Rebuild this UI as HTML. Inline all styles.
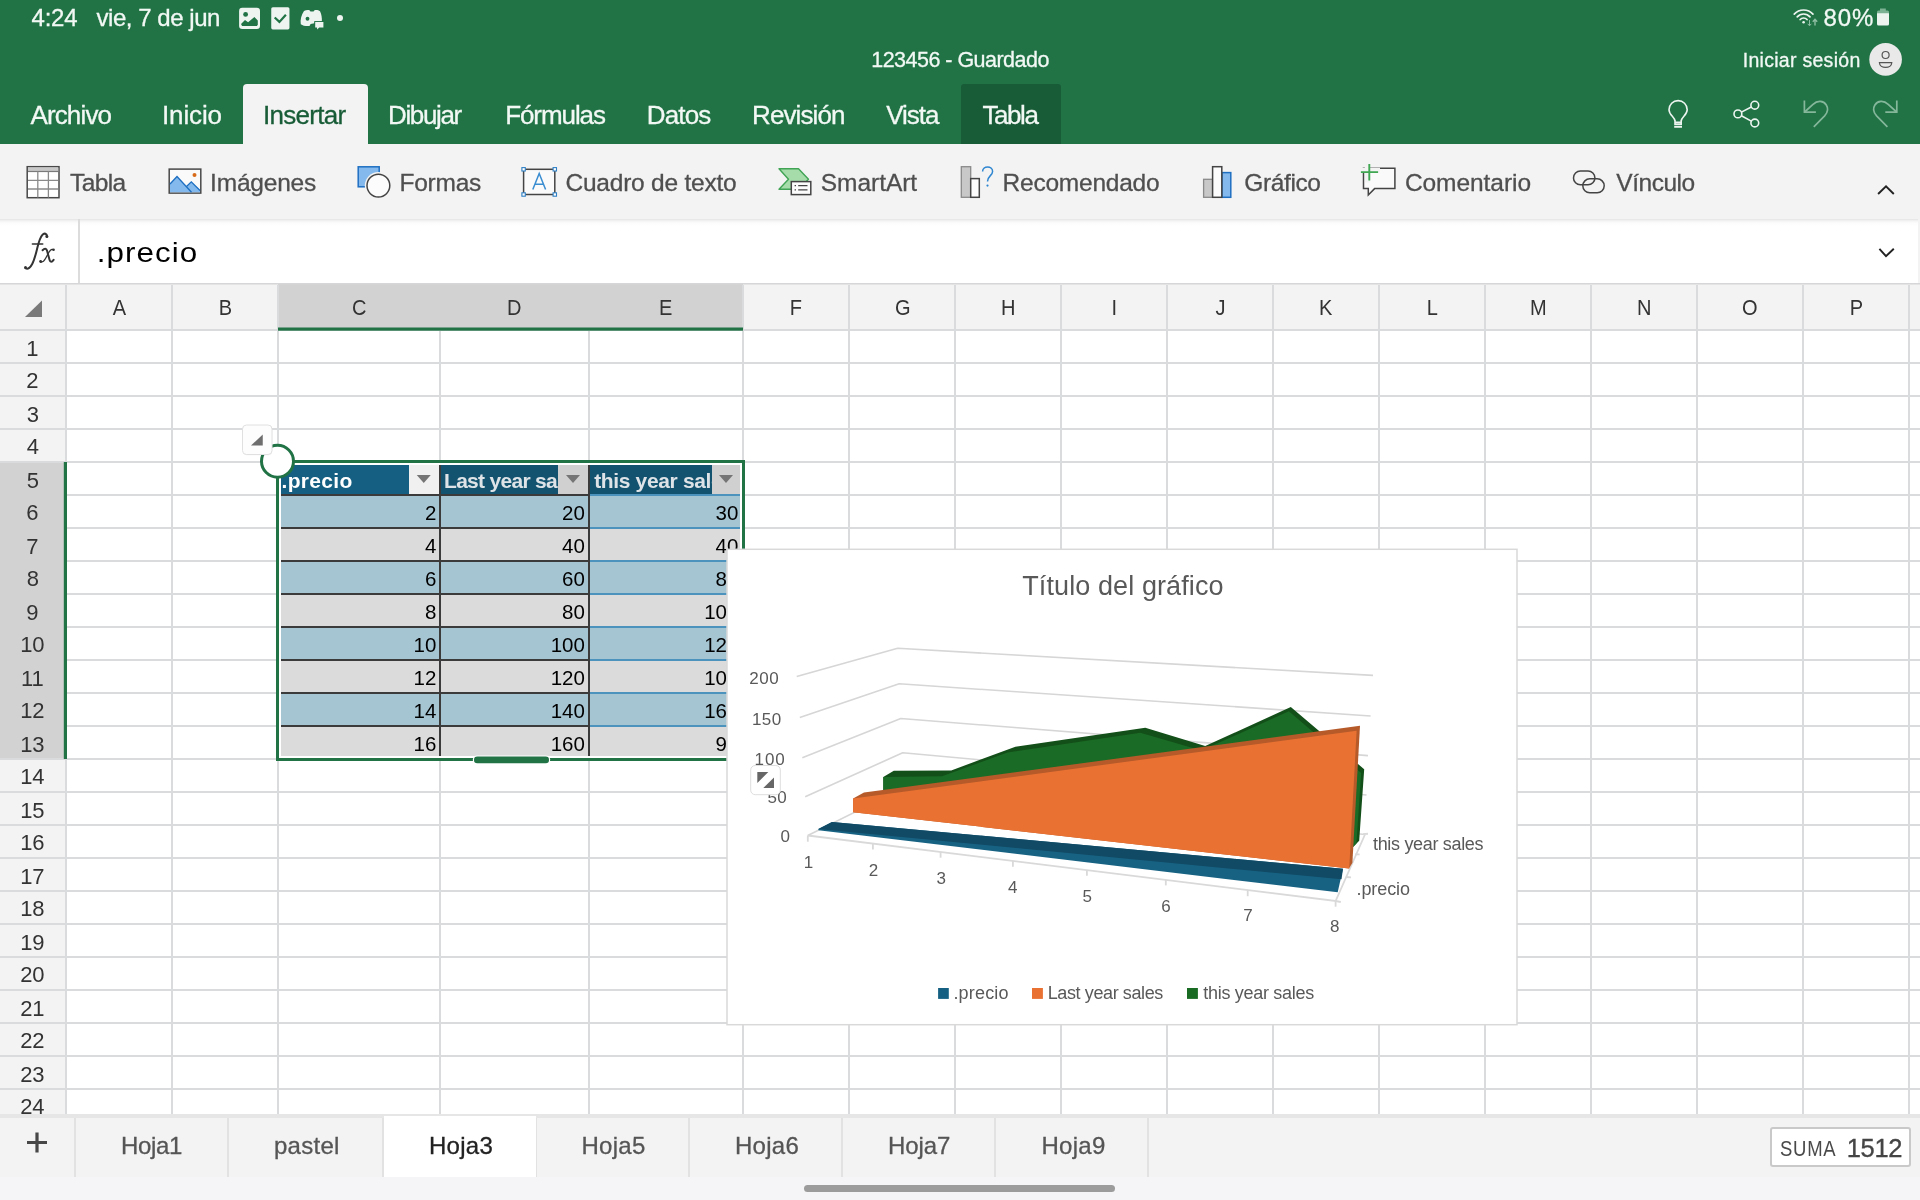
<!DOCTYPE html>
<html lang="es"><head><meta charset="utf-8"><title>Excel</title><style>
html,body{margin:0;padding:0}
body{will-change:transform;width:1920px;height:1200px;overflow:hidden;position:relative;background:#fff;font-family:"Liberation Sans",sans-serif}
.r{position:absolute;display:block}
.t{position:absolute;white-space:nowrap;line-height:1;font-family:"Liberation Sans",sans-serif}
.clip{position:absolute;overflow:hidden}
</style></head><body>
<div class="r" style="left:0;top:284px;width:1920px;height:46px;background:#f3f3f3"></div>
<div class="r" style="left:0;top:330px;width:66px;height:784px;background:#f3f3f3"></div>
<div class="r" style="left:278px;top:284px;width:465px;height:46px;background:#d2d2d2"></div>
<div class="r" style="left:0;top:462px;width:65px;height:297px;background:#d2d2d2"></div>
<svg class="r" style="left:0;top:283px" width="1920" height="831" viewBox="0 283 1920 831">
<g stroke="#dadbdd" stroke-width="2" fill="none" shape-rendering="crispEdges">
<line x1="0" y1="283.7" x2="1920" y2="283.7" stroke="#d6d6d8" stroke-width="1.8" shape-rendering="auto"/>
<line x1="0" y1="330" x2="1920" y2="330"/>
<line x1="0" y1="363" x2="1920" y2="363"/>
<line x1="0" y1="396" x2="1920" y2="396"/>
<line x1="0" y1="429" x2="1920" y2="429"/>
<line x1="0" y1="462" x2="1920" y2="462"/>
<line x1="0" y1="495" x2="1920" y2="495"/>
<line x1="0" y1="528" x2="1920" y2="528"/>
<line x1="0" y1="561" x2="1920" y2="561"/>
<line x1="0" y1="594" x2="1920" y2="594"/>
<line x1="0" y1="627" x2="1920" y2="627"/>
<line x1="0" y1="660" x2="1920" y2="660"/>
<line x1="0" y1="693" x2="1920" y2="693"/>
<line x1="0" y1="726" x2="1920" y2="726"/>
<line x1="0" y1="759" x2="1920" y2="759"/>
<line x1="0" y1="792" x2="1920" y2="792"/>
<line x1="0" y1="825" x2="1920" y2="825"/>
<line x1="0" y1="858" x2="1920" y2="858"/>
<line x1="0" y1="891" x2="1920" y2="891"/>
<line x1="0" y1="924" x2="1920" y2="924"/>
<line x1="0" y1="957" x2="1920" y2="957"/>
<line x1="0" y1="990" x2="1920" y2="990"/>
<line x1="0" y1="1023" x2="1920" y2="1023"/>
<line x1="0" y1="1056" x2="1920" y2="1056"/>
<line x1="0" y1="1089" x2="1920" y2="1089"/>
<line x1="66" y1="284.6" x2="66" y2="1114"/>
<line x1="172" y1="284.6" x2="172" y2="1114"/>
<line x1="278" y1="284.6" x2="278" y2="1114"/>
<line x1="440" y1="284.6" x2="440" y2="1114"/>
<line x1="589" y1="284.6" x2="589" y2="1114"/>
<line x1="743" y1="284.6" x2="743" y2="1114"/>
<line x1="849" y1="284.6" x2="849" y2="1114"/>
<line x1="955" y1="284.6" x2="955" y2="1114"/>
<line x1="1061" y1="284.6" x2="1061" y2="1114"/>
<line x1="1167" y1="284.6" x2="1167" y2="1114"/>
<line x1="1273" y1="284.6" x2="1273" y2="1114"/>
<line x1="1379" y1="284.6" x2="1379" y2="1114"/>
<line x1="1485" y1="284.6" x2="1485" y2="1114"/>
<line x1="1591" y1="284.6" x2="1591" y2="1114"/>
<line x1="1697" y1="284.6" x2="1697" y2="1114"/>
<line x1="1803" y1="284.6" x2="1803" y2="1114"/>
<line x1="1909" y1="284.6" x2="1909" y2="1114"/>
</g>
<rect x="438" y="284.6" width="4" height="44" fill="#d2d2d2"/>
<rect x="587" y="284.6" width="4" height="44" fill="#d2d2d2"/>
<rect x="0" y="493" width="64" height="4" fill="#d2d2d2"/>
<rect x="0" y="526" width="64" height="4" fill="#d2d2d2"/>
<rect x="0" y="559" width="64" height="4" fill="#d2d2d2"/>
<rect x="0" y="592" width="64" height="4" fill="#d2d2d2"/>
<rect x="0" y="625" width="64" height="4" fill="#d2d2d2"/>
<rect x="0" y="658" width="64" height="4" fill="#d2d2d2"/>
<rect x="0" y="691" width="64" height="4" fill="#d2d2d2"/>
<rect x="0" y="724" width="64" height="4" fill="#d2d2d2"/>
<rect x="278" y="327.5" width="465" height="3.2" fill="#217346"/>
<rect x="63.8" y="462" width="3.2" height="297" fill="#217346"/>
<path d="M42 300.5 L42 317 L25 317 Z" fill="#7a7a7a"/>
</svg>
<span class="t" style="left:111.50px;top:297.00px;font-size:22.5px;color:#333;transform:scaleX(0.89);transform-origin:7.50px 0;">A</span>
<span class="t" style="left:217.50px;top:297.00px;font-size:22.5px;color:#333;transform:scaleX(0.89);transform-origin:7.50px 0;">B</span>
<span class="t" style="left:350.50px;top:297.00px;font-size:22.5px;color:#333;transform:scaleX(0.89);transform-origin:8.50px 0;">C</span>
<span class="t" style="left:506.00px;top:297.00px;font-size:22.5px;color:#333;transform:scaleX(0.89);transform-origin:8.50px 0;">D</span>
<span class="t" style="left:658.00px;top:297.00px;font-size:22.5px;color:#333;transform:scaleX(0.89);transform-origin:8.00px 0;">E</span>
<span class="t" style="left:789.00px;top:297.00px;font-size:22.5px;color:#333;transform:scaleX(0.89);transform-origin:7.00px 0;">F</span>
<span class="t" style="left:893.50px;top:297.00px;font-size:22.5px;color:#333;transform:scaleX(0.89);transform-origin:8.50px 0;">G</span>
<span class="t" style="left:1000.00px;top:297.00px;font-size:22.5px;color:#333;transform:scaleX(0.89);transform-origin:8.00px 0;">H</span>
<span class="t" style="left:1110.50px;top:297.00px;font-size:22.5px;color:#333;transform:scaleX(0.89);transform-origin:3.50px 0;">I</span>
<span class="t" style="left:1215.00px;top:297.00px;font-size:22.5px;color:#333;transform:scaleX(0.89);transform-origin:5.00px 0;">J</span>
<span class="t" style="left:1318.00px;top:297.00px;font-size:22.5px;color:#333;transform:scaleX(0.89);transform-origin:8.00px 0;">K</span>
<span class="t" style="left:1425.50px;top:297.00px;font-size:22.5px;color:#333;transform:scaleX(0.89);transform-origin:6.50px 0;">L</span>
<span class="t" style="left:1529.00px;top:297.00px;font-size:22.5px;color:#333;transform:scaleX(0.89);transform-origin:9.00px 0;">M</span>
<span class="t" style="left:1636.00px;top:297.00px;font-size:22.5px;color:#333;transform:scaleX(0.89);transform-origin:8.00px 0;">N</span>
<span class="t" style="left:1741.00px;top:297.00px;font-size:22.5px;color:#333;transform:scaleX(0.89);transform-origin:9.00px 0;">O</span>
<span class="t" style="left:1848.50px;top:297.00px;font-size:22.5px;color:#333;transform:scaleX(0.89);transform-origin:7.50px 0;">P</span>
<span class="t" style="left:26.25px;top:338.00px;font-size:22px;color:#333;">1</span>
<span class="t" style="left:26.25px;top:370.00px;font-size:22px;color:#333;">2</span>
<span class="t" style="left:26.75px;top:404.00px;font-size:22px;color:#333;">3</span>
<span class="t" style="left:26.75px;top:436.00px;font-size:22px;color:#333;">4</span>
<span class="t" style="left:26.75px;top:470.00px;font-size:22px;color:#333;">5</span>
<span class="t" style="left:26.25px;top:502.00px;font-size:22px;color:#333;">6</span>
<span class="t" style="left:26.25px;top:536.00px;font-size:22px;color:#333;">7</span>
<span class="t" style="left:26.75px;top:568.00px;font-size:22px;color:#333;">8</span>
<span class="t" style="left:26.25px;top:602.00px;font-size:22px;color:#333;">9</span>
<span class="t" style="left:20.13px;top:634.00px;font-size:22px;color:#333;">10</span>
<span class="t" style="left:20.95px;top:668.00px;font-size:22px;color:#333;">11</span>
<span class="t" style="left:20.13px;top:700.00px;font-size:22px;color:#333;">12</span>
<span class="t" style="left:20.13px;top:734.00px;font-size:22px;color:#333;">13</span>
<span class="t" style="left:20.13px;top:766.00px;font-size:22px;color:#333;">14</span>
<span class="t" style="left:20.13px;top:800.00px;font-size:22px;color:#333;">15</span>
<span class="t" style="left:20.13px;top:832.00px;font-size:22px;color:#333;">16</span>
<span class="t" style="left:20.13px;top:866.00px;font-size:22px;color:#333;">17</span>
<span class="t" style="left:20.13px;top:898.00px;font-size:22px;color:#333;">18</span>
<span class="t" style="left:20.13px;top:932.00px;font-size:22px;color:#333;">19</span>
<span class="t" style="left:20.13px;top:964.00px;font-size:22px;color:#333;">20</span>
<span class="t" style="left:20.13px;top:998.00px;font-size:22px;color:#333;">21</span>
<span class="t" style="left:20.13px;top:1030.00px;font-size:22px;color:#333;">22</span>
<span class="t" style="left:20.13px;top:1064.00px;font-size:22px;color:#333;">23</span>
<div class="clip" style="left:0px;top:1090px;width:66px;height:24px"><span class="t" style="left:20.13px;top:6.00px;font-size:22px;color:#333;">24</span></div>
<div class="r" style="left:0;top:0;width:1920px;height:144px;background:#217346"></div>
<div class="r" style="left:0;top:144px;width:1920px;height:75px;background:#f3f3f3"></div>
<div class="r" style="left:243px;top:84px;width:125px;height:61px;background:#f3f3f3;border-radius:4px 4px 0 0"></div>
<div class="r" style="left:961px;top:84px;width:100px;height:60px;background:#185c37;border-radius:3px 3px 0 0"></div>
<div class="r" style="left:0;top:219px;width:1918px;height:64px;background:linear-gradient(#e4e4e4 0px,#f4f4f4 2px,#fcfcfc 4px,#fff 7px)"></div>
<div class="r" style="left:1918px;top:219px;width:2px;height:64px;background:#f3f3f3"></div>
<div class="r" style="left:78.1px;top:219px;width:1.5px;height:64px;background:#dcdcdc"></div>
<svg class="r" style="left:18px;top:228px" width="44" height="46" viewBox="18 228 44 46" role="img" aria-label="fx"><title>fx</title><g fill="none" stroke="#333" stroke-linecap="round"><path d="M47.0 236.6 C47 233.6 44.3 232.7 42.4 234.8 C39.6 238 38.6 243 37.3 248 C35.8 254 34.6 259.5 32.2 264 C30.5 267.3 28 269.6 25.8 268.4" stroke-width="2"/><path d="M32.4 244 H42.7" stroke-width="1.6"/><path d="M42.6 250.2 C44.5 248.2 46.3 248.3 47 250.6 L49.6 260 C50.2 262.4 51.8 262.3 53.6 259.8" stroke-width="2"/><path d="M53.6 249.8 C52 248.7 50.5 249.6 49.2 251.8 L45.5 258.5 C44 261.2 42.2 262.5 40.5 261.8" stroke-width="1.3"/></g><g fill="#333"><circle cx="46.9" cy="236.6" r="1.5"/><circle cx="25.5" cy="267.6" r="1.5"/><circle cx="53.5" cy="249.7" r="1.3"/><circle cx="40.6" cy="261.5" r="1.4"/></g></svg>
<span class="t" style="left:31.60px;top:6.00px;font-size:24px;color:#f2f8f4;letter-spacing:-0.254px;-webkit-text-stroke:0.3px;">4:24</span>
<span class="t" style="left:96.50px;top:6.00px;font-size:24px;color:#f2f8f4;letter-spacing:-0.456px;-webkit-text-stroke:0.3px;">vie, 7 de jun</span>
<span class="t" style="left:1823.40px;top:6.00px;font-size:24px;color:#f2f8f4;letter-spacing:0.952px;-webkit-text-stroke:0.3px;">80%</span>
<span class="t" style="left:871.25px;top:50.00px;font-size:21.5px;color:#f2f8f4;letter-spacing:-0.523px;-webkit-text-stroke:0.3px;">123456 - Guardado</span>
<span class="t" style="left:1742.75px;top:51.00px;font-size:19.5px;color:#f2f8f4;letter-spacing:0.284px;-webkit-text-stroke:0.3px;">Iniciar sesión</span>
<span class="t" style="left:30.40px;top:102.00px;font-size:26px;color:#f2f8f4;letter-spacing:-0.839px;-webkit-text-stroke:0.3px;">Archivo</span>
<span class="t" style="left:162.00px;top:102.00px;font-size:26px;color:#f2f8f4;letter-spacing:-0.127px;-webkit-text-stroke:0.3px;">Inicio</span>
<span class="t" style="left:262.90px;top:102.00px;font-size:26px;color:#185c37;letter-spacing:-0.698px;-webkit-text-stroke:0.3px;">Insertar</span>
<span class="t" style="left:388.00px;top:102.00px;font-size:26px;color:#f2f8f4;letter-spacing:-1.351px;-webkit-text-stroke:0.3px;">Dibujar</span>
<span class="t" style="left:505.20px;top:102.00px;font-size:26px;color:#f2f8f4;letter-spacing:-1.079px;-webkit-text-stroke:0.3px;">Fórmulas</span>
<span class="t" style="left:646.75px;top:102.00px;font-size:26px;color:#f2f8f4;letter-spacing:-0.855px;-webkit-text-stroke:0.3px;">Datos</span>
<span class="t" style="left:752.00px;top:102.00px;font-size:26px;color:#f2f8f4;letter-spacing:-0.893px;-webkit-text-stroke:0.3px;">Revisión</span>
<span class="t" style="left:886.25px;top:102.00px;font-size:26px;color:#f2f8f4;letter-spacing:-1.031px;-webkit-text-stroke:0.3px;">Vista</span>
<span class="t" style="left:982.50px;top:102.00px;font-size:26px;color:#f2f8f4;letter-spacing:-1.449px;-webkit-text-stroke:0.3px;">Tabla</span>
<span class="t" style="left:70.00px;top:171.00px;font-size:24.5px;color:#4f4f4f;letter-spacing:-0.586px;-webkit-text-stroke:0.3px;">Tabla</span>
<span class="t" style="left:210.10px;top:171.00px;font-size:24.5px;color:#4f4f4f;letter-spacing:-0.206px;-webkit-text-stroke:0.3px;">Imágenes</span>
<span class="t" style="left:399.50px;top:171.00px;font-size:24.5px;color:#4f4f4f;letter-spacing:-0.257px;-webkit-text-stroke:0.3px;">Formas</span>
<span class="t" style="left:565.50px;top:171.00px;font-size:24.5px;color:#4f4f4f;letter-spacing:-0.229px;-webkit-text-stroke:0.3px;">Cuadro de texto</span>
<span class="t" style="left:820.80px;top:171.00px;font-size:24.5px;color:#4f4f4f;letter-spacing:-0.049px;-webkit-text-stroke:0.3px;">SmartArt</span>
<span class="t" style="left:1002.60px;top:171.00px;font-size:24.5px;color:#4f4f4f;letter-spacing:-0.233px;-webkit-text-stroke:0.3px;">Recomendado</span>
<span class="t" style="left:1244.30px;top:171.00px;font-size:24.5px;color:#4f4f4f;letter-spacing:-0.390px;-webkit-text-stroke:0.3px;">Gráfico</span>
<span class="t" style="left:1404.90px;top:171.00px;font-size:24.5px;color:#4f4f4f;letter-spacing:-0.057px;-webkit-text-stroke:0.3px;">Comentario</span>
<span class="t" style="left:1616.25px;top:171.00px;font-size:24.5px;color:#4f4f4f;letter-spacing:-0.457px;-webkit-text-stroke:0.3px;">Vínculo</span>
<span class="t" style="left:96.75px;top:239.00px;font-size:27.5px;color:#000;letter-spacing:0.917px;transform:scaleX(1.14);transform-origin:2.00px 0;">.precio</span>
<svg class="r" style="left:230px;top:415px" width="530" height="360" viewBox="230 415 530 360">
<rect x="279" y="463" width="463" height="295" fill="#fff"/>
<rect x="281" y="465" width="128" height="29" fill="#156082"/>
<rect x="409" y="465" width="30" height="29" fill="#f0f0f0"/>
<rect x="441" y="465" width="117" height="29" fill="#135370"/>
<rect x="558" y="465" width="30" height="29" fill="#d0d0d0"/>
<rect x="590" y="465" width="122" height="29" fill="#135370"/>
<rect x="712" y="465" width="28" height="29" fill="#d0d0d0"/>
<rect x="281" y="496" width="158" height="31" fill="#a6c5d3"/>
<rect x="441" y="496" width="147" height="31" fill="#a6c5d3"/>
<rect x="590" y="496" width="150" height="31" fill="#a6c5d3"/>
<rect x="281" y="529" width="158" height="31" fill="#dbdbdb"/>
<rect x="441" y="529" width="147" height="31" fill="#dbdbdb"/>
<rect x="590" y="529" width="150" height="31" fill="#dbdbdb"/>
<rect x="281" y="562" width="158" height="31" fill="#a6c5d3"/>
<rect x="441" y="562" width="147" height="31" fill="#a6c5d3"/>
<rect x="590" y="562" width="150" height="31" fill="#a6c5d3"/>
<rect x="281" y="595" width="158" height="31" fill="#dbdbdb"/>
<rect x="441" y="595" width="147" height="31" fill="#dbdbdb"/>
<rect x="590" y="595" width="150" height="31" fill="#dbdbdb"/>
<rect x="281" y="628" width="158" height="31" fill="#a6c5d3"/>
<rect x="441" y="628" width="147" height="31" fill="#a6c5d3"/>
<rect x="590" y="628" width="150" height="31" fill="#a6c5d3"/>
<rect x="281" y="661" width="158" height="31" fill="#dbdbdb"/>
<rect x="441" y="661" width="147" height="31" fill="#dbdbdb"/>
<rect x="590" y="661" width="150" height="31" fill="#dbdbdb"/>
<rect x="281" y="694" width="158" height="31" fill="#a6c5d3"/>
<rect x="441" y="694" width="147" height="31" fill="#a6c5d3"/>
<rect x="590" y="694" width="150" height="31" fill="#a6c5d3"/>
<rect x="281" y="727" width="158" height="29" fill="#dbdbdb"/>
<rect x="441" y="727" width="147" height="29" fill="#dbdbdb"/>
<rect x="590" y="727" width="150" height="29" fill="#dbdbdb"/>
<rect x="281" y="494" width="309" height="2" fill="#3b3b3b"/>
<rect x="590" y="494" width="150" height="2" fill="#4c94bd"/>
<rect x="281" y="527" width="309" height="2" fill="#3b3b3b"/>
<rect x="590" y="527" width="150" height="2" fill="#4c94bd"/>
<rect x="281" y="560" width="309" height="2" fill="#3b3b3b"/>
<rect x="590" y="560" width="150" height="2" fill="#4c94bd"/>
<rect x="281" y="593" width="309" height="2" fill="#3b3b3b"/>
<rect x="590" y="593" width="150" height="2" fill="#4c94bd"/>
<rect x="281" y="626" width="309" height="2" fill="#3b3b3b"/>
<rect x="590" y="626" width="150" height="2" fill="#4c94bd"/>
<rect x="281" y="659" width="309" height="2" fill="#3b3b3b"/>
<rect x="590" y="659" width="150" height="2" fill="#4c94bd"/>
<rect x="281" y="692" width="309" height="2" fill="#3b3b3b"/>
<rect x="590" y="692" width="150" height="2" fill="#4c94bd"/>
<rect x="281" y="725" width="309" height="2" fill="#3b3b3b"/>
<rect x="590" y="725" width="150" height="2" fill="#4c94bd"/>
<rect x="439" y="465" width="2" height="291" fill="#3b3b3b"/>
<rect x="588" y="465" width="2" height="291" fill="#3b3b3b"/>
<path d="M416.75 475 L430.75 475 L423.75 483 Z" fill="#757575"/>
<path d="M566 475 L580 475 L573 483 Z" fill="#757575"/>
<path d="M719 475 L733 475 L726 483 Z" fill="#757575"/>
<path d="M276 460 H745 V761 H276 Z M279 463 V758 H742 V463 Z" fill="#217346" fill-rule="evenodd"/>
<rect x="472.8" y="755.5" width="77.4" height="8.6" rx="4.3" fill="#fff"/>
<rect x="474" y="756.6" width="75" height="6.6" rx="3.3" fill="#217346"/>
<circle cx="277.5" cy="461.25" r="16" fill="#fff" stroke="#217346" stroke-width="3"/>
<rect x="242.8" y="425.6" width="29.4" height="29.6" rx="4" fill="#000" opacity="0.06"/>
<rect x="242.5" y="425" width="29.5" height="29.5" rx="4" fill="#fdfdfd" stroke="#e0e0e0" stroke-width="1"/>
<path d="M262.75 434.4 L262.75 445.6 L251 445.6 Z" fill="#6e6e6e"/>
</svg>
<div class="clip" style="left:281px;top:465px;width:128px;height:29px"><span class="t" style="left:0.50px;top:5.00px;font-size:21px;color:#fff;letter-spacing:0.329px;font-weight:bold;">.precio</span></div>
<div class="clip" style="left:441px;top:465px;width:117px;height:29px"><span class="t" style="left:3.00px;top:5.00px;font-size:21px;color:#dde3e6;letter-spacing:-0.700px;font-weight:bold;">Last year sales</span></div>
<div class="clip" style="left:590px;top:465px;width:122px;height:29px"><span class="t" style="left:4.20px;top:5.00px;font-size:21px;color:#dde3e6;letter-spacing:-0.350px;font-weight:bold;">this year sales</span></div>
<span class="t" style="left:425.00px;top:503.00px;font-size:20.5px;color:#000;">2</span>
<span class="t" style="left:562.10px;top:503.00px;font-size:20.5px;color:#000;">20</span>
<span class="t" style="left:715.60px;top:503.00px;font-size:20.5px;color:#000;">30</span>
<span class="t" style="left:425.00px;top:536.00px;font-size:20.5px;color:#000;">4</span>
<span class="t" style="left:562.10px;top:536.00px;font-size:20.5px;color:#000;">40</span>
<span class="t" style="left:715.60px;top:536.00px;font-size:20.5px;color:#000;">40</span>
<span class="t" style="left:425.00px;top:569.00px;font-size:20.5px;color:#000;">6</span>
<span class="t" style="left:562.10px;top:569.00px;font-size:20.5px;color:#000;">60</span>
<span class="t" style="left:715.60px;top:569.00px;font-size:20.5px;color:#000;">80</span>
<span class="t" style="left:425.00px;top:602.00px;font-size:20.5px;color:#000;">8</span>
<span class="t" style="left:562.10px;top:602.00px;font-size:20.5px;color:#000;">80</span>
<span class="t" style="left:704.20px;top:602.00px;font-size:20.5px;color:#000;">100</span>
<span class="t" style="left:413.60px;top:635.00px;font-size:20.5px;color:#000;">10</span>
<span class="t" style="left:550.70px;top:635.00px;font-size:20.5px;color:#000;">100</span>
<span class="t" style="left:704.20px;top:635.00px;font-size:20.5px;color:#000;">120</span>
<span class="t" style="left:413.60px;top:668.00px;font-size:20.5px;color:#000;">12</span>
<span class="t" style="left:550.70px;top:668.00px;font-size:20.5px;color:#000;">120</span>
<span class="t" style="left:704.20px;top:668.00px;font-size:20.5px;color:#000;">100</span>
<span class="t" style="left:413.60px;top:701.00px;font-size:20.5px;color:#000;">14</span>
<span class="t" style="left:550.70px;top:701.00px;font-size:20.5px;color:#000;">140</span>
<span class="t" style="left:704.20px;top:701.00px;font-size:20.5px;color:#000;">160</span>
<span class="t" style="left:413.60px;top:734.00px;font-size:20.5px;color:#000;">16</span>
<span class="t" style="left:550.70px;top:734.00px;font-size:20.5px;color:#000;">160</span>
<span class="t" style="left:715.60px;top:734.00px;font-size:20.5px;color:#000;">90</span>
<svg class="r" style="left:726px;top:548px" width="793" height="479" viewBox="726 548 793 479">
<rect x="727" y="549.3" width="790" height="475.4" fill="#fff" stroke="#d9d9d9" stroke-width="1.5"/>
<g stroke="#d6d6d6" stroke-width="1.6" fill="none" stroke-linejoin="round">
<polyline points="796.7,676.5 897.7,648.3 1373.0,675.4"/>
<polyline points="799.8,717.5 899.2,683.8 1370.6,716.0"/>
<polyline points="802.3,757.7 900.8,718.5 1368.0,755.6"/>
<polyline points="805.2,796.7 902.7,752.7 1366.5,795.0"/>
<polyline points="807.8,835.5 904.5,787.5 1365.0,834.5"/>
</g>
<g stroke="#d9d9d9" stroke-width="1.8" fill="none">
<polyline points="807.8,835.5 1335.6,901.0 1365.0,834.5"/>
<line x1="807.8" y1="835.5" x2="807.8" y2="841.7"/>
<line x1="872.9" y1="843.6" x2="872.9" y2="849.4"/>
<line x1="940.6" y1="852" x2="940.6" y2="857.7"/>
<line x1="1012.9" y1="861" x2="1012.9" y2="866.7"/>
<line x1="1086.9" y1="870.3" x2="1086.9" y2="875.8"/>
<line x1="1165.8" y1="880" x2="1165.8" y2="885.4"/>
<line x1="1247.7" y1="890.2" x2="1247.7" y2="896.25"/>
<line x1="1335.6" y1="901" x2="1335.6" y2="906.7"/>
<line x1="1335.6" y1="901" x2="1340.8" y2="902"/>
<line x1="1345.8" y1="877" x2="1351" y2="877.3"/>
<line x1="1355" y1="854.4" x2="1359.6" y2="854.4"/>
<line x1="1363" y1="834.2" x2="1368" y2="833.75"/>
</g>
<polygon points="893.8,770.8 951.2,770.4 1015.4,746.8 1145.3,727.8 1205.2,746.0 1290.8,707.1 1364.2,769.2 1359.2,840.8 1353.3,846.7 883.3,800.0 883.3,777.0" fill="#134f19"/>
<polygon points="883.3,777.0 942.0,776.3 1007.5,752.4 1140.3,732.7 1201.5,750.6 1288.9,711.2 1361.2,773.0 1356.4,843.6 1353.3,846.7 883.3,800.0" fill="#1a6b25"/>
<polygon points="853.1,798.4 864.0,792.5 1360.0,725.8 1352.4,862.8 1349.0,868.6 853.1,812.2" fill="#b65a2a"/>
<polygon points="853.1,798.6 1356.6,730.8 1349.2,868.6 853.1,812.2" fill="#e97233"/>
<polygon points="818.4,829.0 832.0,822.0 1343.0,868.8 1337.7,892.3 818.4,830.2" fill="#176283"/>
<polygon points="818.4,829.0 832.0,822.0 1343.0,868.8 1341.5,879.3" fill="#114a64"/>
<rect x="938.1" y="988" width="10.7" height="10.9" fill="#156082"/>
<rect x="1032" y="988" width="10.9" height="10.9" fill="#e97132"/>
<rect x="1187" y="988" width="10.9" height="10.9" fill="#196b24"/>
</svg>
<span class="t" style="left:1022.25px;top:573.00px;font-size:27px;color:#595959;letter-spacing:0.098px;">Título del gráfico</span>
<span class="t" style="left:749.20px;top:670.00px;font-size:17px;color:#595959;letter-spacing:0.595px;">200</span>
<span class="t" style="left:751.90px;top:711.00px;font-size:17px;color:#595959;letter-spacing:0.495px;">150</span>
<span class="t" style="left:754.60px;top:751.00px;font-size:17px;color:#595959;letter-spacing:0.845px;">100</span>
<span class="t" style="left:767.50px;top:789.00px;font-size:17px;color:#595959;letter-spacing:0.295px;">50</span>
<span class="t" style="left:780.50px;top:828.00px;font-size:17px;color:#595959;">0</span>
<span class="t" style="left:803.75px;top:854.00px;font-size:17px;color:#595959;">1</span>
<span class="t" style="left:868.80px;top:862.00px;font-size:17px;color:#595959;">2</span>
<span class="t" style="left:936.50px;top:870.00px;font-size:17px;color:#595959;">3</span>
<span class="t" style="left:1008.00px;top:879.00px;font-size:17px;color:#595959;">4</span>
<span class="t" style="left:1082.40px;top:888.00px;font-size:17px;color:#595959;">5</span>
<span class="t" style="left:1161.30px;top:898.00px;font-size:17px;color:#595959;">6</span>
<span class="t" style="left:1243.20px;top:907.00px;font-size:17px;color:#595959;">7</span>
<span class="t" style="left:1330.10px;top:918.00px;font-size:17px;color:#595959;">8</span>
<span class="t" style="left:1373.00px;top:835.00px;font-size:18px;color:#595959;letter-spacing:-0.325px;">this year sales</span>
<span class="t" style="left:1356.50px;top:880.00px;font-size:18px;color:#595959;letter-spacing:-0.086px;">.precio</span>
<span class="t" style="left:953.40px;top:984.00px;font-size:18px;color:#595959;letter-spacing:0.181px;">.precio</span>
<span class="t" style="left:1047.75px;top:984.00px;font-size:18px;color:#595959;letter-spacing:-0.394px;">Last year sales</span>
<span class="t" style="left:1203.30px;top:984.00px;font-size:18px;color:#595959;letter-spacing:-0.296px;">this year sales</span>
<svg class="r" style="left:748px;top:764px" width="36" height="34" viewBox="748 764 36 34"><rect x="750.7" y="765.5" width="29.6" height="29.2" rx="4.5" fill="#fff" stroke="#dedede" stroke-width="1"/><path d="M757.3 772.1 H768.3 L757.3 782.9 Z" fill="#666"/><path d="M774 777.5 V787.9 H763.3 Z" fill="#666"/></svg>
<div class="r" style="left:0;top:1114px;width:1920px;height:4px;background:#e6e6e6"></div>
<div class="r" style="left:0;top:1118px;width:1920px;height:59px;background:#f3f3f3"></div>
<div class="r" style="left:0;top:1177px;width:1920px;height:23px;background:#f5f5f7"></div>
<div class="r" style="left:74.25px;top:1118px;width:1.5px;height:58.5px;background:#e2e2e2"></div>
<div class="r" style="left:227.25px;top:1118px;width:1.5px;height:58.5px;background:#e2e2e2"></div>
<div class="r" style="left:382.25px;top:1118px;width:1.5px;height:58.5px;background:#e2e2e2"></div>
<div class="r" style="left:535.25px;top:1118px;width:1.5px;height:58.5px;background:#e2e2e2"></div>
<div class="r" style="left:688.25px;top:1118px;width:1.5px;height:58.5px;background:#e2e2e2"></div>
<div class="r" style="left:841.25px;top:1118px;width:1.5px;height:58.5px;background:#e2e2e2"></div>
<div class="r" style="left:994.25px;top:1118px;width:1.5px;height:58.5px;background:#e2e2e2"></div>
<div class="r" style="left:1147.25px;top:1118px;width:1.5px;height:58.5px;background:#e2e2e2"></div>
<div class="r" style="left:384px;top:1116px;width:152px;height:60.5px;background:#fff"></div>
<svg class="r" style="left:20px;top:1125px" width="34" height="34" viewBox="20 1125 34 34"><path d="M27 1142.5 H47 M37 1132.5 V1152.5" stroke="#474747" stroke-width="3.2" fill="none"/></svg>
<div class="r" style="left:1770.2px;top:1127.2px;width:140.4px;height:40.3px;background:#fff;border:2px solid #c9c9c9;border-radius:3px;box-sizing:border-box"></div>
<div class="r" style="left:804px;top:1185px;width:311px;height:7px;border-radius:3.5px;background:#9c9c9c"></div>
<span class="t" style="left:121.00px;top:1134.00px;font-size:24px;color:#555;letter-spacing:-0.340px;-webkit-text-stroke:0.3px;">Hoja1</span>
<span class="t" style="left:274.00px;top:1134.00px;font-size:24px;color:#555;letter-spacing:0.258px;-webkit-text-stroke:0.3px;">pastel</span>
<span class="t" style="left:429.00px;top:1134.00px;font-size:24px;color:#222;letter-spacing:0.285px;-webkit-text-stroke:0.3px;">Hoja3</span>
<span class="t" style="left:581.50px;top:1134.00px;font-size:24px;color:#555;letter-spacing:0.285px;-webkit-text-stroke:0.3px;">Hoja5</span>
<span class="t" style="left:735.00px;top:1134.00px;font-size:24px;color:#555;letter-spacing:0.285px;-webkit-text-stroke:0.3px;">Hoja6</span>
<span class="t" style="left:888.00px;top:1134.00px;font-size:24px;color:#555;letter-spacing:-0.090px;-webkit-text-stroke:0.3px;">Hoja7</span>
<span class="t" style="left:1041.50px;top:1134.00px;font-size:24px;color:#555;letter-spacing:0.285px;-webkit-text-stroke:0.3px;">Hoja9</span>
<span class="t" style="left:1779.80px;top:1139.00px;font-size:21.5px;color:#4a4a4a;letter-spacing:0.857px;transform:scaleX(0.86);transform-origin:0.00px 0;">SUMA</span>
<span class="t" style="left:1846.80px;top:1136.00px;font-size:25.5px;color:#454545;letter-spacing:-0.365px;-webkit-text-stroke:0.35px #454545;">1512</span>
<svg class="r" style="left:230px;top:0" width="130" height="40" viewBox="230 0 130 40">
<rect x="239.1" y="7.8" width="20.9" height="21.2" rx="3.2" fill="#eef5f1"/>
<circle cx="245.6" cy="14.4" r="2.4" fill="#217346"/>
<path d="M241.25 23.75 L245 20 L248.1 22.2 L254.4 16.9 L257.8 20.6 L257.8 24.7 L256.9 25.9 L242.2 25.9 L241.25 24.7 Z" fill="#217346"/>
<rect x="271.25" y="7.2" width="18.2" height="22.2" rx="1.6" fill="#eef5f1"/>
<path d="M274.7 17.5 L279.4 21.9 L285.9 14.7" stroke="#217346" stroke-width="2.2" fill="none"/>
<path d="M304 11 C306 10 308 9.8 309.5 10.3 L310.5 11.6 L313.5 11.6 L314.5 10.3 C316 9.8 318.5 10 320 11.2 C321.5 14 322 17.5 321.9 21.2 L314.4 21.2 L314.4 23.2 L310.6 24 L309.5 26 C306 26.3 303 25.8 300.8 24.2 C300 19.5 301.5 14.5 304 11 Z" fill="#eef5f1"/>
<circle cx="307.5" cy="18.75" r="1.9" fill="#217346"/>
<path d="M315.2 22 H323.4 V27.5 H319.2 L317.2 29.4 L317 27.5 H315.2 Z" fill="#eef5f1" stroke="#217346" stroke-width="1.6" paint-order="stroke"/>
<circle cx="340" cy="18.1" r="3" fill="#eef5f1"/>
</svg>
<svg class="r" style="left:1785px;top:0" width="120" height="40" viewBox="1785 0 120 40">
<g fill="none" stroke="#eef5f1" stroke-width="1.7" stroke-linecap="round">
<path d="M1800.18 19.52 A4.6 4.6 0 0 1 1807.02 19.52"/>
<path d="M1797.21 16.85 A8.6 8.6 0 0 1 1809.99 16.85"/>
<path d="M1794.24 14.17 A12.6 12.6 0 0 1 1812.96 14.17"/>
</g>
<circle cx="1803.6" cy="22.3" r="1.3" fill="#eef5f1"/>
<g stroke="#8fbda3" stroke-width="1" fill="none"><path d="M1809.5 20 V25.5 M1807.7 23.8 L1809.5 25.8 L1811.3 23.8"/><path d="M1815 25.5 V19.5 M1812.8 21.8 L1815 19.3 L1817.2 21.8" stroke-width="1.4"/></g>
<rect x="1880" y="8.5" width="5.8" height="3" fill="#7db294"/>
<rect x="1877" y="10.4" width="12" height="4" rx="1.5" fill="#7db294"/>
<path d="M1877 13.2 H1889 V24 Q1889 25.6 1887.4 25.6 H1878.6 Q1877 25.6 1877 24 Z" fill="#eef5f1"/>
</svg>
<svg class="r" style="left:1865px;top:40px" width="42" height="40" viewBox="1865 40 42 40">
<circle cx="1885.6" cy="59.4" r="16.3" fill="#e9e9e9"/>
<circle cx="1885.6" cy="55" r="3.5" fill="none" stroke="#555" stroke-width="1.2"/>
<path d="M1879.4 62.6 H1891.8 C1891.8 69 1879.4 69 1879.4 62.6 Z" fill="none" stroke="#555" stroke-width="1.2"/>
</svg>
<svg class="r" style="left:1660px;top:92px" width="250" height="44" viewBox="1660 92 250 44">
<g fill="none" stroke="#eef5f1" stroke-width="1.6">
<path d="M1675 121 C1675 117 1669 115 1669 109.7 A9.1 9.1 0 0 1 1687.2 109.7 C1687.2 115 1681.2 117 1681.2 121"/>
<path d="M1675 120.4 V124.4 H1681.2 V120.4 M1674.5 122.4 H1681.7 M1674.2 126.9 H1682"/>
<circle cx="1754.8" cy="105.2" r="3.9"/><circle cx="1737.9" cy="113.9" r="3.9"/><circle cx="1754.8" cy="123" r="3.9"/>
<path d="M1741.4 112.1 L1751.3 107 M1741.4 115.8 L1751.3 121.1"/>
</g>
<g fill="none" stroke="#85b79b" stroke-width="1.7">
<path d="M1804.4 100.5 V112.2 H1815.9"/>
<path d="M1804.6 112 L1813 104.3 C1817.5 100.2 1823.5 100.6 1826.3 105 C1828.5 108.5 1827.6 112.6 1824.6 115.8 L1813.8 126.8"/>
<path d="M1896.8 100.5 V112.2 H1885.3"/>
<path d="M1896.6 112 L1888.2 104.3 C1883.7 100.2 1877.7 100.6 1874.9 105 C1872.7 108.5 1873.6 112.6 1876.6 115.8 L1887.4 126.8"/>
</g></svg>
<svg class="r" style="left:0;top:150px" width="1920" height="60" viewBox="0 150 1920 60">
<rect x="27.2" y="166.7" width="31.8" height="31" fill="#fff" stroke="#484848" stroke-width="1.5"/>
<rect x="28" y="167.5" width="30.2" height="3.6" fill="#c8c8c8"/>
<path d="M28 171.5 H58.2" stroke="#7a7a7a" stroke-width="1.2"/>
<path d="M28 180.3 H58.2 M28 189 H58.2 M37.8 171.5 V197.5 M48.4 171.5 V197.5" stroke="#8a8a8a" stroke-width="1.3"/>
<rect x="169.2" y="169.1" width="31.6" height="24" fill="#fafafa" stroke="#484848" stroke-width="1.5"/>
<path d="M170 192.3 V184 L177 176.5 L186.5 186.5 L191.3 181.8 L200 190 V192.3 Z" fill="#83b9ec"/>
<path d="M170 184 L177 176.5 L191.5 192.3 M186.5 186.5 L191.3 181.8 L200 190.5" stroke="#1e6fc2" stroke-width="1.3" fill="none"/>
<circle cx="194.5" cy="175" r="2" fill="#d86b1a"/>
<rect x="358.2" y="166.8" width="21" height="20" fill="#83b9ec" stroke="#1e6fc2" stroke-width="1.5"/>
<circle cx="378.4" cy="185.6" r="13.6" fill="#f3f3f3"/>
<circle cx="378.4" cy="185.6" r="11.4" fill="#fcfcfc" stroke="#444" stroke-width="1.5"/>
<rect x="523.6" y="169.3" width="31.2" height="25.2" fill="#fafafa" stroke="#444" stroke-width="1.5"/>
<rect x="521.9" y="167.60000000000002" width="3.4" height="3.4" fill="#fff" stroke="#2e7fc4" stroke-width="1.1"/>
<rect x="553.0999999999999" y="167.60000000000002" width="3.4" height="3.4" fill="#fff" stroke="#2e7fc4" stroke-width="1.1"/>
<rect x="521.9" y="192.8" width="3.4" height="3.4" fill="#fff" stroke="#2e7fc4" stroke-width="1.1"/>
<rect x="553.0999999999999" y="192.8" width="3.4" height="3.4" fill="#fff" stroke="#2e7fc4" stroke-width="1.1"/>
<path d="M532.8 189.5 L539.2 173.5 L545.6 189.5 M535 184.3 H543.4" stroke="#3a8dd0" stroke-width="1.5" fill="none"/>
<path d="M779 168.7 H798.5 L808.5 179.2 L798.5 189.3 H779 L788.5 179.2 Z" fill="#a5dcaa" stroke="#41a455" stroke-width="1.4" stroke-linejoin="round"/>
<rect x="791.3" y="181.6" width="19.5" height="13" fill="#fcfcfc" stroke="#444" stroke-width="1.5"/>
<path d="M794.6 185.7 H796 M798.2 185.7 H807.5 M794.6 189.8 H796 M798.2 189.8 H807.5" stroke="#444" stroke-width="1.2"/>
<rect x="961.3" y="166.7" width="9.4" height="30.6" fill="#c8c8c8" stroke="#8a8a8a" stroke-width="1.3"/>
<rect x="970.7" y="178.6" width="8.6" height="18.7" fill="#fcfcfc" stroke="#444" stroke-width="1.5"/>
<path d="M982.6 171.5 C982.6 165.5 992.6 165.5 992.6 171.5 C992.6 175.5 987.5 176 987.5 181.5" stroke="#2e86d0" stroke-width="1.5" fill="none"/>
<circle cx="987.5" cy="185.6" r="1.1" fill="#2e86d0"/>
<rect x="1203.6" y="179.3" width="9" height="18" fill="#c8c8c8" stroke="#8a8a8a" stroke-width="1.3"/>
<rect x="1222" y="172.6" width="8.8" height="24.7" fill="#83b9ec" stroke="#1e6fc2" stroke-width="1.5"/>
<rect x="1212.6" y="166.7" width="9.2" height="30.6" fill="#fcfcfc" stroke="#444" stroke-width="1.5"/>
<path d="M1363.5 168.2 H1394.9 V188.6 H1374.6 L1368.3 195 V188.6 H1363.5 Z" fill="#fafafa" stroke="#444" stroke-width="1.5" stroke-linejoin="miter"/>
<path d="M1359 170.2 H1380 M1367.4 162 V182.5" stroke="#f3f3f3" stroke-width="5" fill="none"/>
<path d="M1360.9 172.1 H1378.1 M1369.3 164 V180.6" stroke="#3fa652" stroke-width="1.9" fill="none"/>
<rect x="1573.5" y="171" width="21.4" height="13.8" rx="6.9" fill="none" stroke="#444" stroke-width="1.5"/>
<rect x="1582.8" y="178.8" width="21.4" height="14" rx="7" fill="none" stroke="#444" stroke-width="1.5"/>
<path d="M1878.1 194 L1886 186.3 L1893.8 194" stroke="#222" stroke-width="1.9" fill="none"/>
</svg>
<svg class="r" style="left:1870px;top:240px" width="32" height="24" viewBox="1870 240 32 24"><path d="M1879.4 248.8 L1886 256.2 L1893.8 248.8" stroke="#222" stroke-width="1.9" fill="none"/></svg>


</body></html>
